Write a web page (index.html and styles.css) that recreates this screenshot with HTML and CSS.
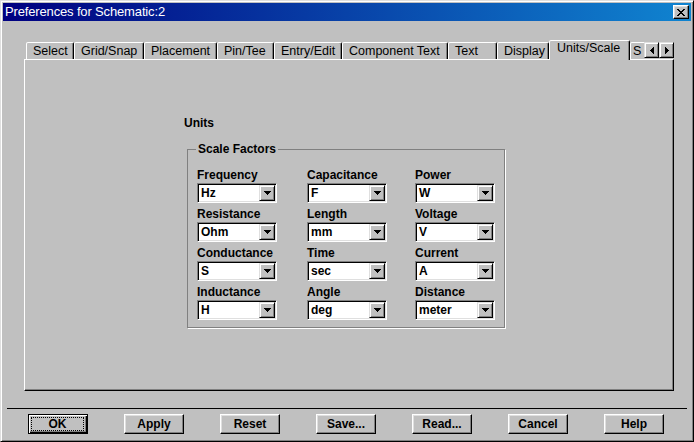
FILE: index.html
```html
<!DOCTYPE html>
<html lang="en">
<head>
<meta charset="utf-8">
<title>Preferences for Schematic:2</title>
<link rel="stylesheet" href="styles.css">
</head>
<body>
<div class="window">
  <div class="titlebar">
    <span class="title">Preferences for Schematic:2</span>
    <button class="close" aria-label="Close"><svg width="8" height="7" viewBox="0 0 8 7" shape-rendering="crispEdges"><path d="M0 0h2v1H0zM6 0h2v1H6zM1 1h2v1H1zM5 1h2v1H5zM2 2h4v1H2zM3 3h2v1H3zM2 4h4v1H2zM1 5h2v1H1zM5 5h2v1H5zM0 6h2v1H0zM6 6h2v1H6z"/></svg></button>
  </div>
  <div class="dialog">
    <div class="tabs">
      <div class="tab tab-select">Select</div>
      <div class="tab tab-grid">Grid/Snap</div>
      <div class="tab tab-place">Placement</div>
      <div class="tab tab-pin">Pin/Tee</div>
      <div class="tab tab-entry">Entry/Edit</div>
      <div class="tab tab-comp">Component Text</div>
      <div class="tab tab-text">Text</div>
      <div class="tab tab-display">Display</div>
      <div class="tab tab-units active">Units/Scale</div>
      <div class="tab tab-partial">S</div>
      <div class="scroller">
        <span class="scroll-btn"><svg width="4" height="7" viewBox="0 0 4 7" shape-rendering="crispEdges"><path d="M3 0h1v7H3zM2 1h1v5H2zM1 2h1v3H1zM0 3h1v1H0z"/></svg></span>
        <span class="scroll-btn"><svg width="4" height="7" viewBox="0 0 4 7" shape-rendering="crispEdges"><path d="M0 0h1v7H0zM1 1h1v5H1zM2 2h1v3H2zM3 3h1v1H3z"/></svg></span>
      </div>
    </div>
    <div class="panel">
      <div class="units">Units</div>
      <fieldset class="group">
        <legend>Scale Factors</legend>
        <div class="grid">
          <div class="field"><div class="label">Frequency</div><div class="combo"><span class="value">Hz</span><span class="drop"><svg width="7" height="4" viewBox="0 0 7 4" shape-rendering="crispEdges"><path d="M0 0h7v1H0zM1 1h5v1H1zM2 2h3v1H2zM3 3h1v1H3z"/></svg></span></div></div>
          <div class="field"><div class="label">Capacitance</div><div class="combo"><span class="value">F</span><span class="drop"><svg width="7" height="4" viewBox="0 0 7 4" shape-rendering="crispEdges"><path d="M0 0h7v1H0zM1 1h5v1H1zM2 2h3v1H2zM3 3h1v1H3z"/></svg></span></div></div>
          <div class="field"><div class="label">Power</div><div class="combo"><span class="value">W</span><span class="drop"><svg width="7" height="4" viewBox="0 0 7 4" shape-rendering="crispEdges"><path d="M0 0h7v1H0zM1 1h5v1H1zM2 2h3v1H2zM3 3h1v1H3z"/></svg></span></div></div>
          <div class="field"><div class="label">Resistance</div><div class="combo"><span class="value">Ohm</span><span class="drop"><svg width="7" height="4" viewBox="0 0 7 4" shape-rendering="crispEdges"><path d="M0 0h7v1H0zM1 1h5v1H1zM2 2h3v1H2zM3 3h1v1H3z"/></svg></span></div></div>
          <div class="field"><div class="label">Length</div><div class="combo"><span class="value">mm</span><span class="drop"><svg width="7" height="4" viewBox="0 0 7 4" shape-rendering="crispEdges"><path d="M0 0h7v1H0zM1 1h5v1H1zM2 2h3v1H2zM3 3h1v1H3z"/></svg></span></div></div>
          <div class="field"><div class="label">Voltage</div><div class="combo"><span class="value">V</span><span class="drop"><svg width="7" height="4" viewBox="0 0 7 4" shape-rendering="crispEdges"><path d="M0 0h7v1H0zM1 1h5v1H1zM2 2h3v1H2zM3 3h1v1H3z"/></svg></span></div></div>
          <div class="field"><div class="label">Conductance</div><div class="combo"><span class="value">S</span><span class="drop"><svg width="7" height="4" viewBox="0 0 7 4" shape-rendering="crispEdges"><path d="M0 0h7v1H0zM1 1h5v1H1zM2 2h3v1H2zM3 3h1v1H3z"/></svg></span></div></div>
          <div class="field"><div class="label">Time</div><div class="combo"><span class="value">sec</span><span class="drop"><svg width="7" height="4" viewBox="0 0 7 4" shape-rendering="crispEdges"><path d="M0 0h7v1H0zM1 1h5v1H1zM2 2h3v1H2zM3 3h1v1H3z"/></svg></span></div></div>
          <div class="field"><div class="label">Current</div><div class="combo"><span class="value">A</span><span class="drop"><svg width="7" height="4" viewBox="0 0 7 4" shape-rendering="crispEdges"><path d="M0 0h7v1H0zM1 1h5v1H1zM2 2h3v1H2zM3 3h1v1H3z"/></svg></span></div></div>
          <div class="field"><div class="label">Inductance</div><div class="combo"><span class="value">H</span><span class="drop"><svg width="7" height="4" viewBox="0 0 7 4" shape-rendering="crispEdges"><path d="M0 0h7v1H0zM1 1h5v1H1zM2 2h3v1H2zM3 3h1v1H3z"/></svg></span></div></div>
          <div class="field"><div class="label">Angle</div><div class="combo"><span class="value">deg</span><span class="drop"><svg width="7" height="4" viewBox="0 0 7 4" shape-rendering="crispEdges"><path d="M0 0h7v1H0zM1 1h5v1H1zM2 2h3v1H2zM3 3h1v1H3z"/></svg></span></div></div>
          <div class="field"><div class="label">Distance</div><div class="combo"><span class="value">meter</span><span class="drop"><svg width="7" height="4" viewBox="0 0 7 4" shape-rendering="crispEdges"><path d="M0 0h7v1H0zM1 1h5v1H1zM2 2h3v1H2zM3 3h1v1H3z"/></svg></span></div></div>
        </div>
      </fieldset>
    </div>
    <div class="separator"></div>
    <div class="buttons">
      <button class="btn default"><span class="focus">OK</span></button>
      <button class="btn">Apply</button>
      <button class="btn">Reset</button>
      <button class="btn">Save...</button>
      <button class="btn">Read...</button>
      <button class="btn">Cancel</button>
      <button class="btn">Help</button>
    </div>
  </div>
</div>
</body>
</html>
```

FILE: styles.css
```css
* { box-sizing: border-box; }
html, body { margin: 0; padding: 0; }
body {
  background: #c0c0c0;
  font-family: "Liberation Sans", Arial, sans-serif;
  color: #000;
  width: 694px;
  height: 442px;
  overflow: hidden;
}
.window {
  width: 694px;
  height: 442px;
  background: #c0c0c0;
  border: 1px solid;
  border-color: #dfdfdf #000 #000 #dfdfdf;
  box-shadow: inset 1px 1px #fff, inset -1px -1px #808080;
  padding: 2px;
  display: flex;
  flex-direction: column;
}
.titlebar {
  height: 18px;
  flex: none;
  background: linear-gradient(to right, #000080, #1084d0);
  display: flex;
  align-items: center;
  justify-content: space-between;
  padding: 0 2px;
  color: #fff;
  font-size: 13px;
  letter-spacing: -0.15px;
  line-height: 18px;
}
.close {
  width: 16px;
  height: 14px;
  padding: 0;
  border: 1px solid;
  border-color: #fff #000 #000 #fff;
  box-shadow: inset -1px -1px #808080, inset 1px 1px #dfdfdf;
  background: #c0c0c0;
  display: flex;
  align-items: center;
  justify-content: center;
}
.close svg { display: block; fill: #000; }
.dialog { padding: 0 4px; }
.tabs {
  display: flex;
  align-items: flex-end;
  height: 19px;
  margin: 19px 0 0 19px;
  font-size: 12.5px;
}
.tab {
  height: 17px;
  padding-left: 6px;
  border: 1px solid;
  border-bottom: none;
  border-color: #fff #000 transparent #fff;
  box-shadow: inset -1px 0 #808080;
  border-radius: 2px 2px 0 0;
  line-height: 16px;
  white-space: nowrap;
  overflow: hidden;
  background: #c0c0c0;
}
.tab-select { width: 48px; }
.tab-grid { width: 70px; }
.tab-place { width: 73px; }
.tab-pin { width: 57px; }
.tab-entry { width: 68px; }
.tab-comp { width: 106px; }
.tab-text { width: 49px; }
.tab-display { width: 52px; }
.tab-units { width: 81px; }
.tab-partial { width: 14px; padding-left: 2px; border-right: none; box-shadow: none; border-radius: 2px 0 0 0; }
.tab.active {
  height: 20px;
  margin-bottom: -1px;
  padding-left: 7px;
  line-height: 15px;
  position: relative;
  z-index: 1;
}
.scroller { display: flex; height: 16px; align-self: flex-start; margin-top: 2px; }
.scroll-btn {
  width: 15px;
  height: 16px;
  border: 1px solid;
  border-color: #dfdfdf #000 #000 #dfdfdf;
  box-shadow: inset 1px 1px #fff, inset -1px -1px #808080;
  background: #c0c0c0;
  display: flex;
  align-items: center;
  justify-content: center;
}
.scroll-btn svg { display: block; fill: #000; }
.panel {
  width: 650px;
  height: 332px;
  margin-left: 17px;
  border: 1px solid;
  border-color: #fff #000 #000 #fff;
  box-shadow: inset -1px -1px #808080;
  padding: 56px 0 0 159px;
}
.units, .label, legend, .value, .btn {
  font-weight: bold;
  font-size: 12px;
}
.units { line-height: 14px; }
.group {
  margin: 12px 0 0 3px;
  width: 318px;
  border: 1px solid #808080;
  box-shadow: 1px 1px #fff;
  padding: 12px 9px 7px 9px;
  min-width: 0;
}
legend {
  line-height: 14px;
  padding: 0 2px;
  margin-left: -1px;
}
.grid {
  display: grid;
  grid-template-columns: 110px 108px 80px;
  row-gap: 4px;
}
.label { line-height: 15px; }
.combo {
  width: 80px;
  height: 20px;
  border: 1px solid;
  border-color: #808080 #fff #fff #808080;
  box-shadow: inset 1px 1px #000, inset -1px -1px #dfdfdf;
  background: #fff;
  padding: 1px;
  display: flex;
  align-items: center;
}
.value { flex: 1; padding-left: 2px; line-height: 16px; }
.drop {
  width: 16px;
  height: 16px;
  border: 1px solid;
  border-color: #dfdfdf #000 #000 #dfdfdf;
  box-shadow: inset 1px 1px #fff, inset -1px -1px #808080;
  background: #c0c0c0;
  display: flex;
  align-items: center;
  justify-content: center;
}
.drop svg { display: block; fill: #000; }
.separator { height: 1px; background: #000; margin-top: 17px; }
.buttons {
  display: flex;
  gap: 36px;
  margin: 5px 0 0 21px;
}
.btn {
  width: 60px;
  height: 20px;
  padding: 0;
  font-family: "Liberation Sans", Arial, sans-serif;
  color: #000;
  border: 1px solid;
  border-color: #fff #000 #000 #fff;
  box-shadow: inset -1px -1px #808080, inset 1px 1px #dfdfdf;
  background: #c0c0c0;
  line-height: 16px;
}
.btn.default {
  border-color: #000;
  box-shadow: inset 1px 1px #fff, inset -1px -1px #000, inset -2px -2px #808080;
  padding: 2px 3px 2px 2px;
}
.focus {
  display: block;
  height: 100%;
  border: 1px dotted #000;
  line-height: 12px;
}
```
